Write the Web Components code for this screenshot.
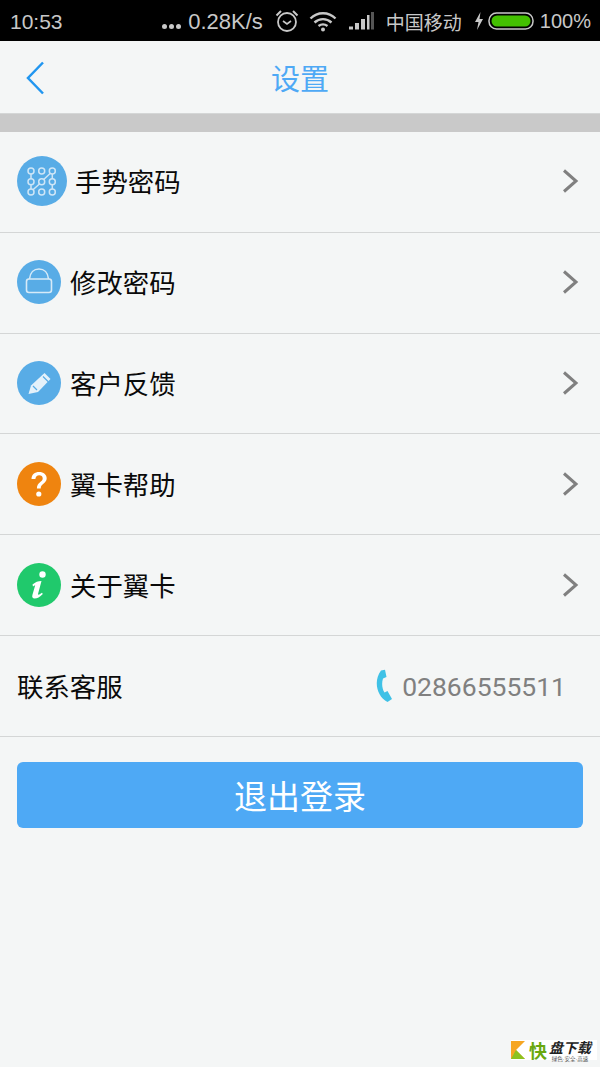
<!DOCTYPE html>
<html lang="zh"><head><meta charset="utf-8">
<style>
html,body{margin:0;padding:0;background:#f4f6f6}
body{width:600px;height:1067px;overflow:hidden;font-family:"Noto Sans CJK SC","Roboto",sans-serif;position:relative}
</style></head><body>
<app-status></app-status>
<app-nav>设置</app-nav>
<div style="height:18px;background:#c9c9c9"></div>
<set-row label="手势密码" size="50">
<svg slot="icon" width="50" height="50" viewBox="0 0 50 50"><circle cx="25" cy="25" r="25" fill="#58ace6"/><g fill="none" stroke="#cfe6f7" stroke-width="1.500"><circle cx="14" cy="15" r="3"/><circle cx="24.700" cy="15" r="3"/><circle cx="35.300" cy="15" r="3"/><circle cx="14" cy="25.700" r="3"/><circle cx="24.700" cy="25.700" r="3"/><circle cx="35.300" cy="25.700" r="3"/><circle cx="14" cy="36" r="3"/><circle cx="24.700" cy="36" r="3"/><circle cx="35.300" cy="36" r="3"/><path d="M14 18v4.700M14 28.700v4.300M35.300 18v4.700M35.300 28.700v4.300M16 33.800l6.700-6M26.700 23.500l6.700-6.300"/></g></svg>
</set-row>
<set-row label="修改密码"><svg slot="icon" width="44" height="44" viewBox="0 0 44 44"><circle cx="22" cy="22" r="22" fill="#58ace6"/><path d="M12.500 19C13 12.500 17 9 22 9s9 3.500 9.500 10" fill="none" stroke="#d6eaf8" stroke-width="1.600"/><rect x="9.500" y="19" width="25" height="13.500" rx="2.500" fill="none" stroke="#d6eaf8" stroke-width="1.600"/></svg></set-row>
<set-row label="客户反馈"><svg slot="icon" width="44" height="44" viewBox="0 0 44 44"><circle cx="22" cy="22" r="22" fill="#58ace6"/><path d="M11.500 33l2.500-8.500L27.500 12l6 6L21 31z" fill="#e4f1fa"/><path d="M26 15.500l5.500 5.500M16 25l4 4" stroke="#58ace6" stroke-width="1.200" fill="none"/></svg></set-row>
<set-row label="翼卡帮助"><svg slot="icon" width="44" height="44" viewBox="0 0 44 44"><circle cx="22" cy="22" r="22" fill="#ef840f"/><path d="M14.500 17c0-4.500 3.300-7 7.700-7 4.300 0 7.500 2.500 7.500 6.300 0 5.200-6 5.300-6 10.200h-3.800c0-6.300 5.800-6.500 5.800-10 0-2-1.500-3.200-3.500-3.200-2.200 0-3.600 1.400-3.800 3.700z" fill="#fff"/><circle cx="21.800" cy="32" r="2.600" fill="#fff"/></svg></set-row>
<set-row label="关于翼卡"><svg slot="icon" width="44" height="44" viewBox="0 0 44 44"><circle cx="22" cy="22" r="22" fill="#20c96c"/><circle cx="25.500" cy="11.500" r="3.200" fill="#fff"/><path d="M15.500 21.500c3-2.500 5.500-3.500 9-3.500l-3.500 13c0 1 1 1 4-1.200l.8 1.200c-3 3-5.500 4.500-8.200 4.500-2 0-2.800-1.200-2.200-3.500l2.800-9.700c-.8.300-1.500.8-2.200 1.200z" fill="#fff"/></svg></set-row>
<contact-row label="联系客服" phone="02866555511"></contact-row>
<logout-button>退出登录</logout-button>
<kuai-mark></kuai-mark>
<script>
function def(name, html){
  customElements.define(name, class extends HTMLElement{
    connectedCallback(){
      if(this.shadowRoot) return;
      const r=this.attachShadow({mode:"open"});
      r.innerHTML=typeof html==="function"?html(this):html;
    }
  });
}
const chevron='<svg width="18" height="26" viewBox="0 0 18 26"><path d="M3 2.500l12 10.500L3 23.500" fill="none" stroke="#808080" stroke-width="3"/></svg>';
def("app-status",`<style>
:host{display:flex;align-items:center;height:41px;background:#000;color:#c8c8c8;font:20px "Liberation Sans",sans-serif;padding:2px 9px 0 10px;box-sizing:border-box;white-space:nowrap}
.t{flex:1;font-size:21px}
.sp{font-size:22px}
.dots{display:flex;gap:2px;margin-right:7px;padding-top:9px}
.dots i{width:5px;height:5px;border-radius:50%;background:#c8c8c8}
svg{display:block;flex:none}
.cn{font:19px "Noto Sans CJK SC",sans-serif;margin:0 12px 0 11px}
</style>
<span class="t">10:53</span>
<span class="dots"><i></i><i></i><i></i></span><span class="sp">0.28K/s</span>
<svg style="margin-left:12px;margin-top:-2px" width="24" height="26" viewBox="0 0 24 26"><circle cx="12" cy="14" r="9" fill="none" stroke="#c8c8c8" stroke-width="1.800"/><path d="M8 13l4 3 4-3" fill="none" stroke="#c8c8c8" stroke-width="1.600"/><path d="M1.500 7.500L6 3M22.500 7.500L18 3" stroke="#c8c8c8" stroke-width="2"/></svg>
<svg style="margin-left:10px;margin-top:-2px" width="28" height="22" viewBox="0 0 28 22"><g fill="none" stroke="#c8c8c8" stroke-width="2.400"><path d="M1.500 8.500c7-7 18-7 25 0"/><path d="M5.500 12.500c5-4.500 12-4.500 17 0"/><path d="M9.500 16c2.800-2 6.200-2 9 0"/></g><circle cx="14" cy="19.500" r="2" fill="#c8c8c8"/></svg>
<svg style="margin-left:12px;margin-top:-2px" width="26" height="20" viewBox="0 0 26 20"><g fill="#c8c8c8"><path d="M0 15.500h4v3H0zM6 12h4v6.500H6zM12 8h4v10.500h-4zM18 4h2.500v14.500H18z"/></g><path d="M22 1h3v17.500h-3z" fill="#555"/></svg>
<span class="cn">中国移动</span>
<svg style="margin-top:-2px" width="10" height="20" viewBox="0 0 10 20"><path d="M6.500 1L1 11h3.500L3 19l6-11H5.500z" fill="#c8c8c8"/></svg>
<svg style="margin-left:4px;margin-top:-2px" width="46" height="18" viewBox="0 0 46 18"><rect x="1" y="1" width="44" height="16" rx="7.500" fill="none" stroke="#c8c8c8" stroke-width="1.500"/><rect x="3.500" y="3.500" width="39" height="11" rx="5.500" fill="#43c000"/></svg>
<span style="margin-left:6px">100%</span>`);
def("app-nav",`<style>
:host{display:flex;align-items:center;justify-content:center;position:relative;height:72px;border-bottom:1px solid #d4d6d6;color:#4ea9f5;font-size:29px}
svg{position:absolute;left:25px;top:19px}
</style><svg width="22" height="36" viewBox="0 0 22 36"><path d="M18 2.500L3 18l15 15.500" fill="none" stroke="#2196f0" stroke-width="2.500"/></svg><slot></slot>`);
def("set-row",h=>`<style>
:host{display:flex;align-items:center;height:100.800px;box-sizing:border-box;border-bottom:1px solid #d4d6d6;padding:0 21px 1px 17px;color:#0a0a0a;font-size:26.400px}
.l{flex:1;margin-left:${h.getAttribute("size")==="50"?8:9}px;padding-bottom:1px}
::slotted(svg),svg{display:block;flex:none}
</style><slot name="icon"></slot><span class="l">${h.getAttribute("label")}</span>${chevron}`);
def("contact-row",h=>`<style>
:host{display:flex;align-items:center;height:100.800px;box-sizing:border-box;border-bottom:1px solid #d4d6d6;padding:0 34px 0 17px;color:#0a0a0a;font-size:26.400px}
.l{flex:1;padding-bottom:1px}
.p{font:26.500px Roboto,sans-serif;color:#808080;margin-left:8px;padding-top:1px}
svg{display:block;flex:none}
</style><span class="l">${h.getAttribute("label")}</span>
<svg width="19" height="34" viewBox="0 0 19 34"><path d="M6 1.500L10 .8l1.500 7.200L8 9.500c-1.500 4.500-1 10.500 1.500 14l3-1.500L17 30l-4.500 3C2 28-2 12 6 1.500z" fill="#3fc1e6"/></svg>
<span class="p">${h.getAttribute("phone")}</span>`);
def("logout-button",`<style>
:host{display:flex;align-items:center;justify-content:center;height:66px;box-sizing:border-box;padding-top:1px;margin:25px 17px 0;background:#4ea9f5;border-radius:6px;color:#fff;font-size:33px}
</style><slot></slot>`);
def("kuai-mark",`<style>
:host{position:absolute;left:511px;top:1040px;display:flex;align-items:center;background:#fff;height:20px;width:86px;white-space:nowrap}
.k{font:bold 18px "Noto Sans CJK SC",sans-serif;color:#6aa80f;margin:0 2px;line-height:20px}
.d{display:block;margin-top:1px}
.a{display:block;font:bold italic 14px/16px "Liberation Sans","Noto Sans CJK SC",sans-serif;color:#222;text-align:center}
.b{display:block;font:5.500px/6px "Liberation Sans","Noto Sans CJK SC",sans-serif;color:#555;text-align:center}
svg{display:block;flex:none}
</style><svg width="16" height="18" viewBox="0 0 16 18"><path d="M0 0h14L5 9l9 9H0z" fill="#f6a623"/><path d="M5 9l9 9H0z" fill="#8cc21f"/></svg><span class="k">快</span><span class="d"><span class="a">盘下载</span><span class="b">绿色·安全·高速</span></span>`);
</script>
</body></html>
